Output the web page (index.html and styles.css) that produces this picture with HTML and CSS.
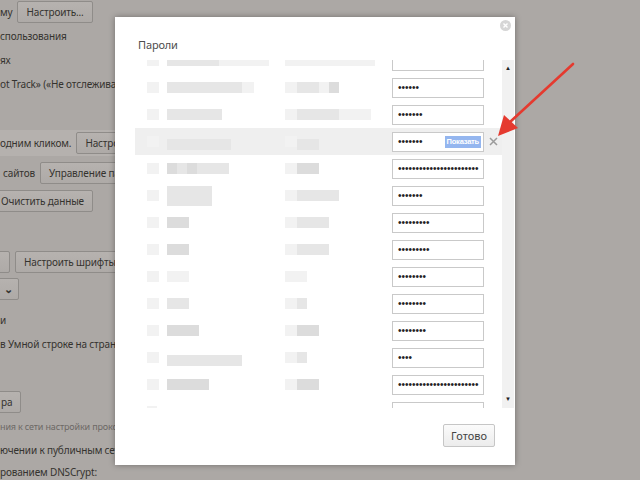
FILE: index.html
```html
<!DOCTYPE html>
<html lang="ru">
<head>
  <meta charset="UTF-8">
  <title>Пароли</title>
  <link rel="stylesheet" href="styles.css">
</head>
<body>

  <!-- Страница настроек (под затемнением) -->
  <div class="page">
    <div class="line"><span>му</span><button class="btn">Настроить...</button></div>
    <div class="line">спользования</div>
    <div class="line">ях</div>
    <div class="line">ot Track» («Не отслеживать»)</div>
    <div class="line tall hover gap-a"><span>одним кликом.</span><button class="btn">Настроить</button></div>
    <div class="line tall gap-b"><span class="ind">сайтов</span><button class="btn">Управление паролями</button></div>
    <div class="line tall gap-c"><button class="btn off">Очистить данные</button></div>
    <div class="line tall gap-d"><button class="btn off stub"></button><button class="btn">Настроить шрифты</button></div>
    <div class="line tall gap-e"><button class="btn off sel"><span class="chev">⌄</span></button></div>
    <div class="line gap-f">и</div>
    <div class="line">в Умной строке на странице</div>
    <div class="line gap-g"><button class="btn off">ра</button></div>
    <div class="line small">ния к сети настройки прокси-сервера</div>
    <div class="line">ючении к публичным сетям</div>
    <div class="line last">рованием DNSCrypt:</div>
  </div>

  <!-- Диалог паролей -->
  <div class="dialog">
    <div class="dlg-head">
      <span class="dlg-title">Пароли</span>
      <svg class="dlg-close" width="11" height="11" viewBox="0 0 11 11">
        <circle cx="5.5" cy="5.5" r="5.5" fill="#d6d6d6"/>
        <path d="M3.5 3.5 L7.5 7.5 M7.5 3.5 L3.5 7.5" stroke="#fff" stroke-width="1.4"/>
      </svg>
    </div>

    <div class="list">
      <div class="rows">
        <div class="scroll">
          <div class="row">
            <div class="site"><i class="px w12 t1"></i><i class="px w52 t2 g8"></i><i class="px w50 t1"></i></div>
            <div class="user"><i class="px w90 t1"></i></div>
            <div class="pw"></div>
          </div>
          <div class="row">
            <div class="site"><i class="px w12 t1"></i><i class="px w75 t2 g8"></i><i class="px w12 t1"></i></div>
            <div class="user"><i class="px w12 t1"></i><i class="px w22 t2"></i><i class="px w10 t1"></i><i class="px w10 t3"></i></div>
            <div class="pw"><span class="dots">••••••</span></div>
          </div>
          <div class="row">
            <div class="site"><i class="px w12 t1"></i><i class="px w55 t2 g8"></i></div>
            <div class="user"><i class="px w12 t1"></i><i class="px w42 t2"></i><i class="px w32 t1"></i></div>
            <div class="pw"><span class="dots">•••••••</span></div>
          </div>
          <div class="row active">
            <div class="site"><i class="px w12 t1"></i><i class="px w64 t2 g8 low"></i></div>
            <div class="user"><i class="px w12 t1"></i><i class="px w22 t2 low"></i></div>
            <div class="pw"><span class="dots">•••••••</span><span class="show">Показать</span></div>
            <svg class="del" width="9" height="9" viewBox="0 0 9 9">
              <path d="M1 1 L8 8 M8 1 L1 8" stroke="#9b9b9b" stroke-width="1.5"/>
            </svg>
          </div>
          <div class="row">
            <div class="site"><i class="px w12 t1"></i><i class="px w10 t3 g8"></i><i class="px w10 t2"></i><i class="px w10 t3"></i><i class="px w32 t2"></i></div>
            <div class="user"><i class="px w12 t1"></i><i class="px w22 t3"></i></div>
            <div class="pw"><span class="dots">•••••••••••••••••••••••</span></div>
          </div>
          <div class="row">
            <div class="site"><i class="px w12 t1"></i><i class="px w45 t2 g8 big"></i></div>
            <div class="user"><i class="px w12 t1"></i><i class="px w42 t2"></i></div>
            <div class="pw"><span class="dots">•••••••</span></div>
          </div>
          <div class="row">
            <div class="site"><i class="px w12 t1"></i><i class="px w22 t3 g8"></i></div>
            <div class="user"><i class="px w12 t1"></i><i class="px w32 t2"></i></div>
            <div class="pw"><span class="dots">•••••••••</span></div>
          </div>
          <div class="row">
            <div class="site"><i class="px w12 t1"></i><i class="px w22 t3 g8"></i></div>
            <div class="user"><i class="px w12 t1"></i><i class="px w32 t2"></i></div>
            <div class="pw"><span class="dots">•••••••••</span></div>
          </div>
          <div class="row">
            <div class="site"><i class="px w12 t1"></i><i class="px w22 t1 g8"></i></div>
            <div class="user"><i class="px w12 t1"></i><i class="px w10 t1"></i></div>
            <div class="pw"><span class="dots">••••••••</span></div>
          </div>
          <div class="row">
            <div class="site"><i class="px w12 t1"></i><i class="px w22 t2 g8"></i></div>
            <div class="user"><i class="px w12 t1"></i><i class="px w10 t2"></i></div>
            <div class="pw"><span class="dots">••••••••</span></div>
          </div>
          <div class="row">
            <div class="site"><i class="px w12 t1"></i><i class="px w32 t3 g8"></i></div>
            <div class="user"><i class="px w12 t1"></i><i class="px w22 t3"></i></div>
            <div class="pw"><span class="dots">••••••••</span></div>
          </div>
          <div class="row">
            <div class="site"><i class="px w12 t1"></i><i class="px w75 t2 g8 low"></i></div>
            <div class="user"><i class="px w12 t1"></i><i class="px w10 t2"></i></div>
            <div class="pw"><span class="dots">••••</span></div>
          </div>
          <div class="row">
            <div class="site"><i class="px w12 t1"></i><i class="px w42 t3 g8"></i></div>
            <div class="user"><i class="px w12 t1"></i><i class="px w22 t3"></i></div>
            <div class="pw"><span class="dots">•••••••••••••••••••••••</span></div>
          </div>
          <div class="row">
            <div class="site"><i class="px w10 t1"></i></div>
            <div class="user"></div>
            <div class="pw"></div>
          </div>
        </div>
      </div>
      <div class="scrollbar">
        <span class="arr">▲</span>
        <span class="arr">▼</span>
      </div>
    </div>

    <div class="dlg-foot">
      <button class="done">Готово</button>
    </div>
  </div>

  <!-- Стрелка-указатель -->
  <svg class="arrow" width="90" height="85" viewBox="0 0 90 85">
    <path d="M83 4 L20 62" stroke="#e53a2f" stroke-width="2.6" stroke-linecap="round"/>
    <path d="M8 76 L14 55 L28 68 Z" fill="#e53a2f"/>
  </svg>

</body>
</html>
```

FILE: styles.css
```css
body {
  margin: 0;
  background-color: #aca8a5;
  font-family: "Noto Sans", "Open Sans", sans-serif;
  font-size: 10px;
  letter-spacing: -0.15px;
  color: #35332f;
  overflow: hidden;
  height: 480px;
}

/* страница настроек */
.page {
  display: flex;
  flex-direction: column;
}

.line {
  height: 24px;
  display: flex;
  align-items: center;
  gap: 5px;
  white-space: nowrap;
}

.line.tall {
  height: 26px;
}

.line.last {
  height: 20px;
}

.line.hover {
  width: 500px;
  background-color: #b5b1ae;
}

.gap-a { margin-top: 34px; }
.gap-b { margin-top: 4px; }
.gap-c { margin-top: 2px; }
.gap-d { margin-top: 35px; }
.gap-e { margin-top: 1px; }
.gap-f { margin-top: 6px; }
.gap-g { margin-top: 34px; }

.ind {
  margin-left: 3px;
}

.small {
  font-size: 9px;
  color: #6c6966;
}

.btn {
  height: 22px;
  padding: 0 8px;
  font-family: inherit;
  font-size: 10px;
  letter-spacing: -0.15px;
  color: #35332f;
  background: linear-gradient(#b6b2af, #aeaaa7);
  border: 1px solid #8f8c89;
  border-radius: 2px;
}

.btn.off {
  margin-left: -8px;
}

.btn.stub {
  width: 16px;
}

.btn.sel {
  width: 27px;
  padding: 0;
  text-align: right;
}

.chev {
  display: inline-block;
  margin-right: 5px;
  font-size: 11px;
  font-weight: bold;
  line-height: 10px;
}

/* диалог */
.dialog {
  position: absolute;
  left: 115px;
  top: 17px;
  width: 400px;
  height: 448px;
  background-color: #fff;
  box-shadow: 0 0 6px rgba(0, 0, 0, 0.35);
  display: flex;
  flex-direction: column;
}

.dlg-head {
  height: 43px;
  padding: 20px 0 0 23px;
  box-sizing: border-box;
  position: relative;
}

.dlg-title {
  font-size: 11px;
  line-height: 16px;
  color: #4d4d4d;
}

.dlg-close {
  position: absolute;
  right: 4px;
  top: 3px;
}

.list {
  height: 348px;
  margin-left: 20px;
  margin-right: 1px;
  display: flex;
}

.rows {
  width: 367px;
  overflow: hidden;
}

.scroll {
  margin-top: -13px;
}

.row {
  height: 27px;
  display: flex;
  align-items: center;
  padding-left: 12px;
}

.row.active {
  background-color: #efefef;
}

.site {
  width: 138px;
  display: flex;
  align-items: center;
}

.user {
  width: 107px;
  display: flex;
  align-items: center;
}

.px {
  display: block;
  height: 11px;
}

.px.low { margin-top: 6px; }
.px.big { height: 20px; }
.g8 { margin-left: 8px; }

.w10 { width: 10px; }
.w12 { width: 12px; }
.w22 { width: 22px; }
.w32 { width: 32px; }
.w42 { width: 42px; }
.w45 { width: 45px; }
.w50 { width: 50px; }
.w52 { width: 52px; }
.w55 { width: 55px; }
.w64 { width: 64px; }
.w75 { width: 75px; }
.w90 { width: 90px; }

.t1 { background-color: #f2f2f2; }
.t2 { background-color: #e6e6e6; }
.t3 { background-color: #dcdcdc; }

.pw {
  width: 92px;
  height: 20px;
  box-sizing: border-box;
  border: 1px solid #c9c9c9;
  background-color: #fff;
  padding: 0 2px 0 5px;
  display: flex;
  align-items: center;
  justify-content: space-between;
}

.dots {
  font-family: "Liberation Sans", Arial, sans-serif;
  font-size: 10px;
  letter-spacing: 0;
  color: #222;
  line-height: 18px;
}

.show {
  background-color: #94b6ef;
  color: #fff;
  font-family: "Liberation Sans", Arial, sans-serif;
  font-size: 7.5px;
  font-weight: bold;
  letter-spacing: -0.2px;
  line-height: 12px;
  padding: 0 2px;
}

.del {
  margin-left: 5px;
}

.scrollbar {
  width: 12px;
  background-color: #f1f1f1;
  display: flex;
  flex-direction: column;
  justify-content: space-between;
  align-items: center;
  padding: 4px 0 5px;
  box-sizing: border-box;
}

.arr {
  font-size: 6px;
  line-height: 8px;
  color: #222;
}

.dlg-foot {
  display: flex;
  justify-content: flex-end;
  padding: 16px 20px 0;
}

.done {
  width: 52px;
  height: 23px;
  font-family: inherit;
  font-size: 11px;
  color: #444;
  background: linear-gradient(#fbfbfb, #ececec);
  border: 1px solid #c6c6c6;
  border-radius: 2px;
}

/* стрелка */
.arrow {
  position: absolute;
  left: 490px;
  top: 60px;
}
```
